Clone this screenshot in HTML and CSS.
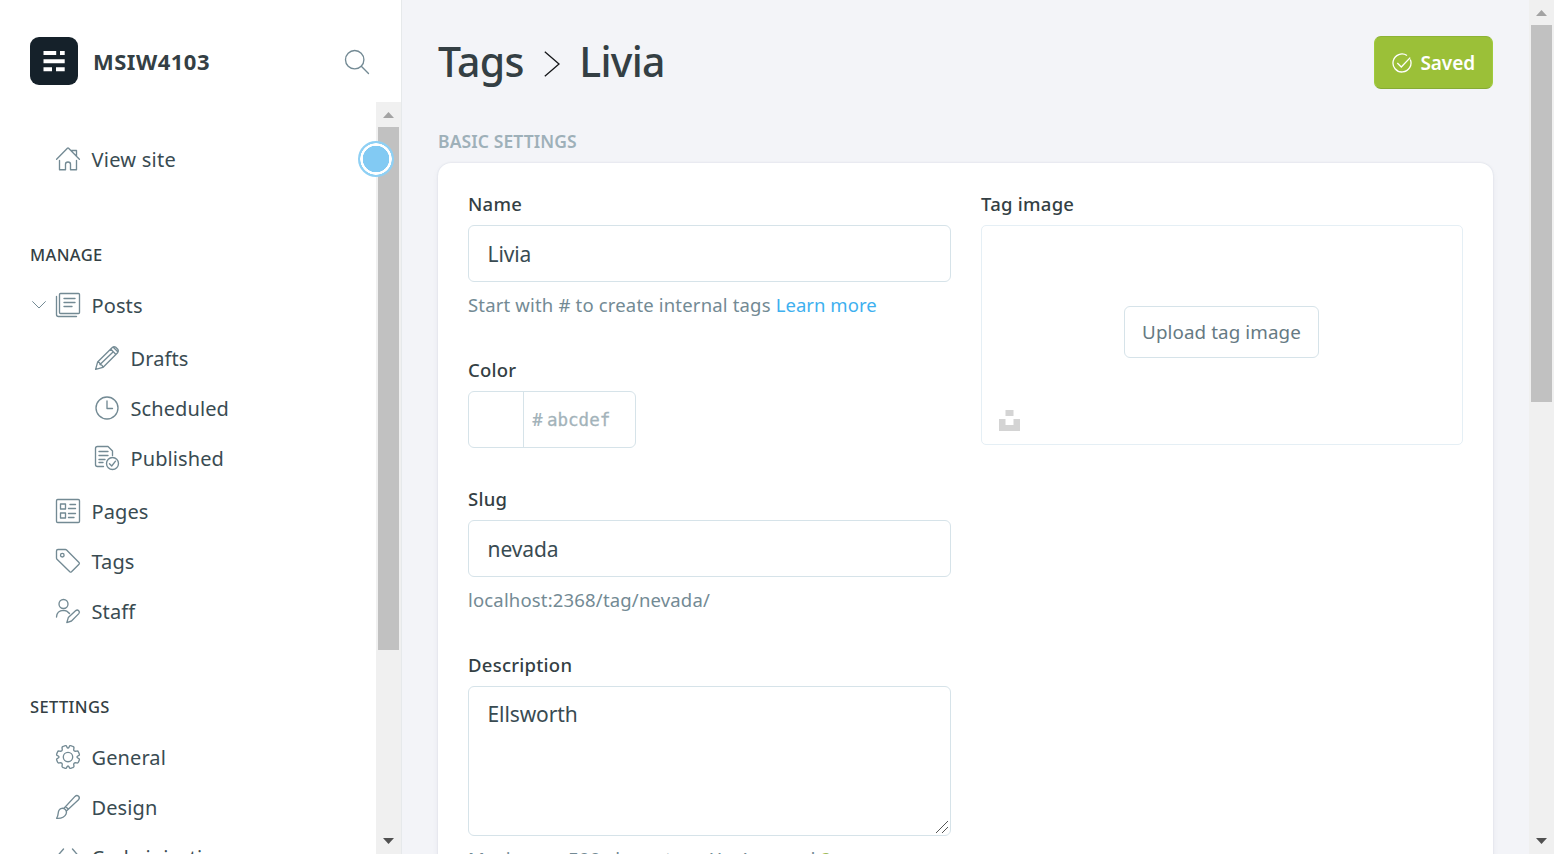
FILE: index.html
```html
<!DOCTYPE html>
<html lang="en">
<head>
<meta charset="utf-8">
<title>Tags - Livia</title>
<link rel="stylesheet" href="styles.css">
</head>
<body>
<div class="app">
  <aside class="sidebar">
    <header class="brand">
      <svg class="logo" viewBox="0 0 48 48"><rect width="48" height="48" rx="9" fill="#15212a"/><path fill="#fff" d="M13.500 14h12.700v4H13.500zM30 14h4.700v4H30zM13.500 22.300h21.200v3.900H13.500zM13.500 30.200h8.500v4h-8.500zM26 30.200h8.700v4H26z"/></svg>
      <span class="site-name">MSIW4103</span>
      <svg class="icon search" viewBox="0 0 24 24"><circle cx="9.700" cy="9.700" r="9.200"/><path d="M16.300 16.300l7.200 7.200"/></svg>
    </header>
    <div class="nav-area">
      <nav class="nav">
        <a class="item view"><svg class="icon" viewBox="0 0 24 24"><path d="M.6 12.200L11.400 1.200q.6-.6 1.200 0L23.400 12.200M3.500 13.500v9.200h6v-5.500q0-2.200 2.500-2.200t2.500 2.200v5.500h6v-9.200M15.500 3.500h5v5.500"/></svg><span>View site</span></a>
        <h2 class="group">Manage</h2>
        <a class="item"><svg class="icon caret" viewBox="0 0 14 8"><path d="M.6.6L7 7 13.400.6"/></svg><svg class="icon" viewBox="0 0 24 24"><rect x="3.500" y=".5" width="20" height="20" rx="1"/><path d="M.5 3.500v18q0 2 2 2h18M8 5.500h11M8 9.500h11M8 13.500h8"/></svg><span>Posts</span></a>
        <div class="sub">
          <a class="item"><svg class="icon" viewBox="0 0 24 24"><path d="M.6 23.400l2-7.300L17.300 1.400q1.500-1.400 3.200-.4l2.500 2.500q1.100 1.700-.4 3.200L7.900 21.400zM2.600 16.100q2.600.2 2.400 2.500 2.700.1 2.900 2.800M15.600 3l5.400 5.400M18 1l5 5M5 18.600L18.300 5.700"/></svg><span>Drafts</span></a>
          <a class="item"><svg class="icon" viewBox="0 0 24 24"><circle cx="12" cy="12" r="11"/><path d="M12 5v7.500h5.500"/></svg><span>Scheduled</span></a>
          <a class="item"><svg class="icon" viewBox="0 0 24 24"><path d="M8.500 20.500h-6q-2 0-2-2v-16q0-2 2-2H13l4.500 4.500v4.500M4 5.500h9M4 9.500h9M4 13.500h6M4 16.500h4"/><circle cx="17.500" cy="17.500" r="6"/><path d="M14.500 17.800l2.200 2.200 3.800-4.800"/></svg><span>Published</span></a>
        </div>
        <a class="item"><svg class="icon" viewBox="0 0 24 24"><rect x=".5" y=".5" width="23" height="23" rx="1.200"/><path d="M4.500 5h5v5h-5zM4.500 14h5v5h-5zM14 5.500h5.500M12.500 9.500h7M12.500 14.500h7M12.500 18.500H18"/></svg><span>Pages</span></a>
        <a class="item"><svg class="icon" viewBox="0 0 24 24"><path d="M.5 2Q.5.500 2 .5h7.400q.7 0 1.200.5L23 13.500q.8.900 0 1.800L15.500 22.800q-.8.700-1.700 0L1 10.200q-.5-.5-.5-1.200z"/><circle cx="6.300" cy="6.200" r="1.800"/></svg><span>Tags</span></a>
        <a class="item"><svg class="icon" viewBox="0 0 24 24"><circle cx="7.500" cy="5" r="4.500"/><path d="M.5 18Q.8 11.500 7.500 11.300q3.500 0 6 3.200M10.800 23.600l1.500-5L19.800 11.600q1.500-1.200 2.900.1t.1 2.900L15.500 22z"/></svg><span>Staff</span></a>
        <h2 class="group">Settings</h2>
        <a class="item"><svg class="icon" viewBox="0 0 24 24"><circle cx="12" cy="12" r="4.700"/><path d="M8.700.8Q10.200.2 10.700 1.600 12 4.500 13.300 1.600 13.800.2 15.300.8L17 1.500Q18.300 2 17.900 3.400 17 6.900 20.600 6.100 22 5.700 22.500 7L23.200 8.700Q23.800 10.200 22.400 10.700 19.500 12 22.400 13.300 23.800 13.800 23.200 15.300L22.500 17Q22 18.300 20.600 17.900 17 17.100 17.900 20.600 18.300 22 17 22.500L15.300 23.200Q13.800 23.800 13.300 22.400 12 19.500 10.700 22.400 10.200 23.800 8.700 23.200L7 22.500Q5.700 22 6.100 20.600 6.900 17.100 3.400 17.900 2 18.300 1.500 17L.8 15.300Q.2 13.800 1.600 13.300 4.500 12 1.600 10.700.2 10.200.8 8.700L1.500 7Q2 5.700 3.400 6.100 6.900 6.900 6.100 3.400 5.700 2 7 1.500z"/></svg><span>General</span></a>
        <a class="item"><svg class="icon" viewBox="0 0 24 24"><path d="M.6 23.300Q2 21 2.200 18.200q.4-4.300 3.600-4.900 2.300-.2 3.800 1.500 1.500 2 .5 4.200Q8 23.700.6 23.300zM7.800 13.500L19 1.400q1.800-1.600 3.600-.2 1.500 1.800-.1 3.600L10.400 16M9.600 11.600l2.700 2.700"/></svg><span>Design</span></a>
        <a class="item"><svg class="icon" viewBox="0 0 24 24"><path d="M7.500 4L.6 12l6.900 8M16.500 4l6.900 8-6.900 8"/></svg><span>Code injection</span></a>
      </nav>
      <div class="scrollbar"><i class="up"></i><b class="thumb"></b><i class="down"></i></div>
    </div>
  </aside>
  <main class="main">
    <div class="content">
      <header class="page-head">
        <h1 class="title"><span>Tags</span><svg class="sep" viewBox="0 0 16 26"><path d="M.8.800L15 13 .8 25.200"/></svg><span>Livia</span></h1>
        <button class="save"><svg viewBox="0 0 20 20"><path d="M18.300 6.500A9 9 0 1 1 15 2.500M5.300 10l4 4L18.200 4.600"/></svg><span>Saved</span></button>
      </header>
      <h4 class="section">Basic settings</h4>
      <section class="card">
        <div class="column">
          <div class="field"><label>Name</label><div class="input">Livia</div><p class="help">Start with # to create internal tags <a>Learn more</a></p></div>
          <div class="field"><label>Color</label><div class="color"><span class="swatch"></span><span class="hash">#</span><span class="hex">abcdef</span></div></div>
          <div class="field"><label>Slug</label><div class="input">nevada</div><p class="help">localhost:2368/tag/nevada/</p></div>
          <div class="field"><label>Description</label><div class="input area">Ellsworth<svg class="grip" viewBox="0 0 14 14"><path d="M1 13L13 1M7 13l6-6"/></svg></div><p class="help">Maximum: <b>500</b> characters. You’ve used <b class="used">9</b></p></div>
        </div>
        <div class="column">
          <label>Tag image</label>
          <div class="upload"><button class="upload-button">Upload tag image</button><svg class="unsplash" viewBox="0 0 21 21"><path d="M6.500 0h8v6h-8zM0 9h6.500v6h8V9H21v12H0z"/></svg></div>
        </div>
      </section>
    </div>
    <div class="scrollbar page"><i class="up"></i><b class="thumb"></b><i class="down"></i></div>
  </main>
  <span class="pointer"></span>
</div>
</body>
</html>
```
FILE: styles.css
```css
* { box-sizing: border-box; }
body { margin: 0; overflow: hidden; font-family: "Noto Sans", "Open Sans", sans-serif; color: #394649; background: #f3f4f8; }
h1, h2, h4, p { margin: 0; }
.app { display: flex; width: 1554px; height: 854px; position: relative; overflow: hidden; }

/* sidebar */
.sidebar { width: 402px; flex: none; display: flex; flex-direction: column; background: #fff; border-right: 1px solid #e6e9eb; }
.brand { height: 102px; flex: none; display: flex; align-items: center; padding: 20px 32px 0 30px; }
.logo { width: 48px; height: 48px; }
.site-name { margin-left: 15px; flex: 1; font-weight: 700; font-size: 22px; letter-spacing: .5px; line-height: 30px; color: #343f44; }
.icon { width: 24px; height: 24px; flex: none; fill: none; stroke: #738a94; stroke-width: 1.350; stroke-linejoin: round; stroke-linecap: round; overflow: visible; }
.search { margin-top: 2px; }
.nav-area { flex: 1; min-height: 0; display: flex; }
.nav { flex: 1; padding-top: 32px; overflow: hidden; }
.item { display: flex; align-items: center; height: 50px; padding-left: 56px; font-size: 20px; letter-spacing: .1px; color: #394b52; }
.item span { margin-left: 11.500px; line-height: 28px; margin-top: 1px; }
.view { letter-spacing: .25px; }
.caret { width: 14px; height: 8px; margin: 0 10px 0 -24px; stroke-width: 1; }
.sub { padding: 3px 0; }
.sub .item { padding-left: 95px; }
.group { height: 24px; margin: 59px 0 13px 30px; font-size: 16.500px; line-height: 24px; font-weight: 500; letter-spacing: .35px; text-transform: uppercase; color: #343f44; }

/* scrollbars */
.scrollbar { width: 25px; flex: none; display: flex; flex-direction: column; align-items: center; background: #f0f0f0; padding: 0 2px; }
.scrollbar i { width: 11px; height: 6px; flex: none; background: #a3a3a3; clip-path: polygon(50% 0, 100% 100%, 0 100%); margin: 10px 0 9px; }
.scrollbar .down { margin: auto 0 10px; background: #505050; clip-path: polygon(0 0, 100% 0, 50% 100%); }
.thumb { width: 21px; height: 523px; background: #c1c1c1; }
.page .thumb { height: 377px; }

/* main */
.main { flex: 1; min-width: 0; display: flex; }
.content { flex: 1; padding: 36px 36px 0; min-width: 0; }
.page-head { display: flex; justify-content: space-between; height: 53px; }
.title { display: flex; align-items: center; font-size: 41px; font-weight: 500; line-height: 52px; letter-spacing: -.7px; color: #343f44; height: 50px; }
.sep { width: 16px; height: 26px; margin: 5px 19.500px 0 20px; fill: none; stroke: #15171a; stroke-width: 1.300; }
.save { width: 119px; height: 53px; display: flex; align-items: center; padding: 0 0 0 17px; border: 1px solid #9fcb3c; border-top-color: #8db335; border-bottom-color: #86ab34; border-radius: 7px; background: #9bc038; color: #fff; font: 600 19px "Noto Sans", sans-serif; letter-spacing: -.1px; }
.save svg { width: 20px; height: 20px; margin-right: 8.500px; fill: none; stroke: #fff; stroke-width: 1.300; }
.section { height: 26px; margin-top: 39px; font-size: 17.500px; font-weight: 600; line-height: 26px; letter-spacing: .1px; text-transform: uppercase; color: #9eb0b9; }
.card { display: grid; grid-template-columns: 483px 482px; column-gap: 30px; margin-top: 9px; padding: 30px; height: 900px; background: #fff; border-radius: 13px; box-shadow: 0 0 2px rgba(50,70,110,.16), 0 3px 7px rgba(50,70,110,.05); align-items: start; }
.column label { display: block; height: 22px; margin-bottom: 10px; font-size: 18.500px; font-weight: 500; letter-spacing: .25px; line-height: 22px; color: #343f44; }
.field + .field { margin-top: 42px; }
.field:nth-child(3) { margin-top: 40px; }
.input { height: 57px; padding: 0 18.500px; border: 1px solid #d6e3e9; border-radius: 6px; font-size: 21px; letter-spacing: -.1px; line-height: 56px; color: #394b52; }
.help { height: 24px; margin-top: 11px; font-size: 18.500px; letter-spacing: .17px; line-height: 24px; color: #738a94; white-space: nowrap; }
.help:has(b) { letter-spacing: .3px; }
.help a { color: #3eb0ef; letter-spacing: .05px; }
.area { position: relative; height: 150px; line-height: 30px; padding-top: 12px; }
.grip { position: absolute; right: 1px; bottom: 1px; width: 14px; height: 14px; fill: none; stroke: #555; stroke-width: 1; }
.used { color: #9fbb58; }
.color { display: flex; align-items: center; width: 168px; height: 57px; border: 1px solid #d6e3e9; border-radius: 6px; color: #a3b3ba; font-family: "DejaVu Sans Mono", monospace; font-size: 17.500px; }
.swatch { width: 55px; height: 55px; border-right: 1px solid #d6e3e9; }
.hash { margin-left: 8px; font: 600 17px "Noto Sans", sans-serif; }
.hex { margin-left: 4px; -webkit-text-stroke: .3px #a3b3ba; }
.upload { display: flex; align-items: center; justify-content: center; position: relative; height: 220px; border: 1px solid #e5eff5; border-radius: 5px; }
.upload-button { width: 195px; height: 52px; margin: -6px 1px 0 0; padding: 0; border: 1px solid #d6e3e9; border-radius: 6px; background: #fff; color: #667a83; font: 400 18.800px "Noto Sans", sans-serif; letter-spacing: .1px; white-space: nowrap; }
.unsplash { position: absolute; left: 17px; bottom: 13px; width: 21px; height: 21px; fill: #d4d4d4; }

/* click indicator */
.pointer { position: absolute; left: 358px; top: 141px; width: 36px; height: 36px; border: 2px solid #8fd0f4; border-radius: 50%; background: radial-gradient(circle, #82caf3 0 13px, #fff 13.500px 15.500px, #8fd0f4 16px); }
```
